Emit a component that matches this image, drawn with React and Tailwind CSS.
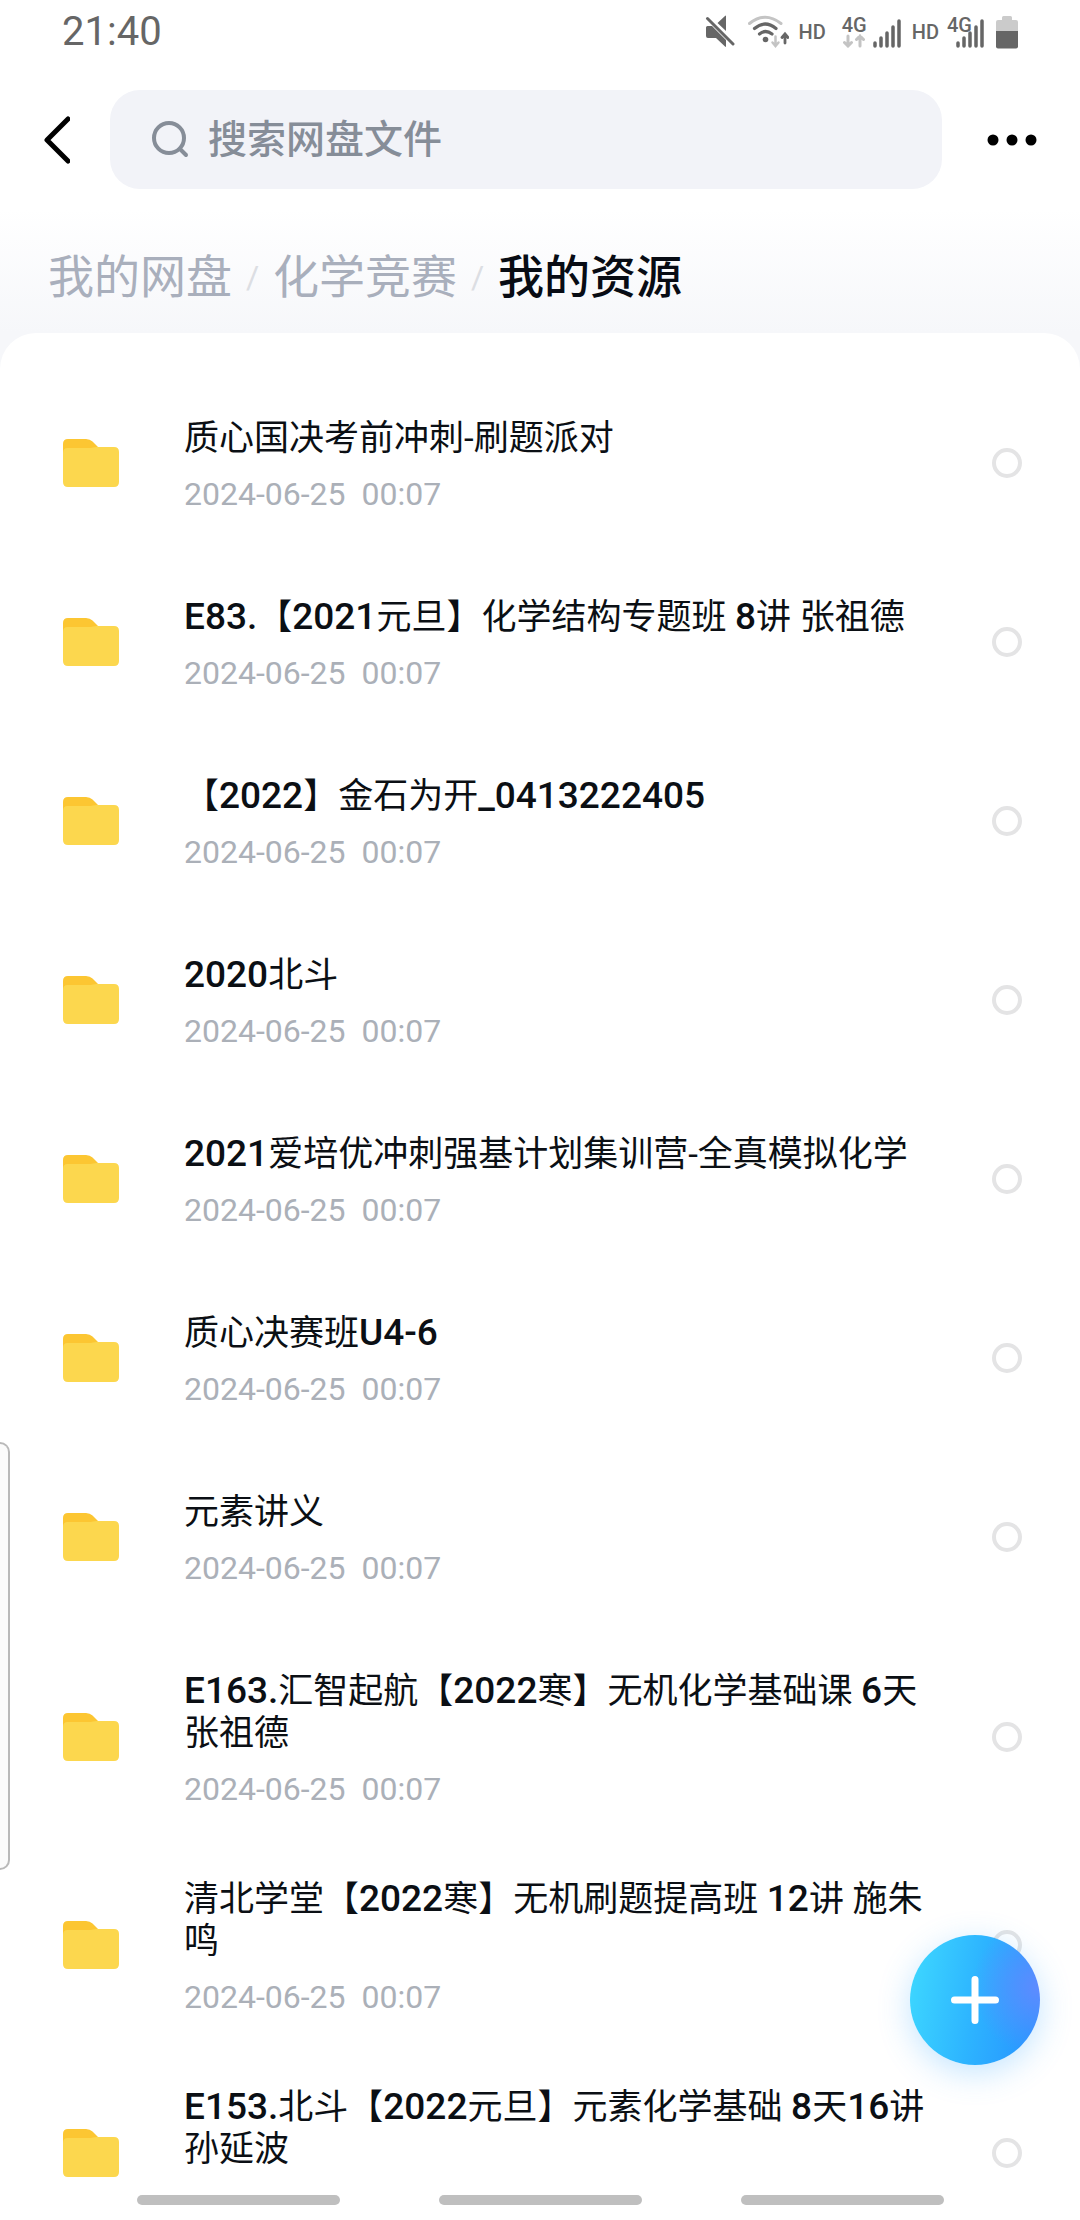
import { useState } from 'react';

const files = [
  { id: 1, name: '质心国决考前冲刺-刷题派对' },
  { id: 2, name: 'E83.【2021元旦】化学结构专题班 8讲 张祖德' },
  { id: 3, name: '【2022】金石为开_0413222405' },
  { id: 4, name: '2020北斗' },
  { id: 5, name: '2021爱培优冲刺强基计划集训营-全真模拟化学' },
  { id: 6, name: '质心决赛班U4-6' },
  { id: 7, name: '元素讲义' },
  { id: 8, name: 'E163.汇智起航【2022寒】无机化学基础课 6天 张祖德' },
  { id: 9, name: '清北学堂【2022寒】无机刷题提高班 12讲 施朱鸣' },
  { id: 10, name: 'E153.北斗【2022元旦】元素化学基础 8天16讲 孙延波' },
];

const MODIFIED = '2024-06-25  00:07';

function MuteIcon() {
  return (
    <svg width="30" height="34" viewBox="0 0 30 34" fill="#666" aria-hidden="true">
      <path d="M12.500 8L20 1q1-1 1 .5V16z" />
      <path d="M1 12.500q0-1.500 1.500-1.500H7l14 14v6q0 1.500-1 .5L11 23H3q-2 0-2-2z" />
      <path d="M2.500 3.500L28 29" stroke="#666" strokeWidth="3" strokeLinecap="round" />
    </svg>
  );
}

function WifiIcon() {
  return (
    <svg width="42" height="34" viewBox="0 0 42 34" fill="none" strokeLinecap="round" aria-hidden="true">
      <path d="M2.500 8.500Q18 -4 34 8.500" stroke="#c4c4c4" strokeWidth="3" />
      <path d="M7.500 13.500Q18 4.500 29 13.500" stroke="#666" strokeWidth="3.200" />
      <path d="M12.500 19Q18.500 14 25 19" stroke="#666" strokeWidth="3.200" />
      <circle cx="18.500" cy="24.500" r="2.800" fill="#666" />
      <path d="M28.500 21.500v9M25.500 27.500l3 3.500l3-3.500" stroke="#c4c4c4" strokeWidth="2.500" />
      <path d="M38 28v-8.500M35 22.500l3-3.500l3 3.500" stroke="#666" strokeWidth="2.800" />
    </svg>
  );
}

function SignalBars() {
  return (
    <svg width="28" height="29" viewBox="0 0 28 29" stroke="#666" strokeWidth="3.500" strokeLinecap="round" aria-hidden="true">
      <path d="M2 24v3M8 19v8M14 14v13M20 8v19M26 2v25" />
    </svg>
  );
}

function DataArrows() {
  return (
    <svg width="22" height="14" viewBox="0 0 22 14" fill="none" stroke="#c4c4c4" strokeWidth="3" strokeLinecap="round" aria-hidden="true">
      <path d="M5 2v10M1.500 8.500L5 12l3.500-3.500M17 12V2M13.500 5.500L17 2l3.500 3.500" />
    </svg>
  );
}

function BatteryIcon() {
  return (
    <svg width="22" height="33" viewBox="0 0 22 33" aria-hidden="true">
      <path d="M6 1.500q0-1.500 1.500-1.500h7q1.500 0 1.500 1.500V4h4q2 0 2 2v10H0V6q0-2 2-2h4z" fill="#cbcbcb" />
      <path d="M0 15h22v15.500q0 2-2 2H2q-2 0-2-2z" fill="#666" />
    </svg>
  );
}

function FolderIcon() {
  return (
    <svg width="56" height="48" viewBox="0 0 56 48" className="block" aria-hidden="true">
      <path d="M0 20V5q0-5 5-5h18q4 0 6.500 2.500L36 9v11z" fill="#fcc632" />
      <path d="M0 14q0-5 4.500-5H25q3 0 5-.5T34 8h17q5 0 5 5v30q0 5-5 5H5q-5 0-5-5z" fill="#fcd74e" />
    </svg>
  );
}

function StatusBar() {
  return (
    <div className="flex h-16 items-center justify-between px-[62px] text-[#666]">
      <time className="text-[40px] leading-none">21:40</time>
      <div className="flex items-center text-[20px] leading-none font-medium">
        <MuteIcon />
        <span className="ml-3"><WifiIcon /></span>
        <span className="ml-[10px]">HD</span>
        <span className="ml-4 flex items-end gap-[6px]">
          <span className="flex flex-col items-center">
            <span className="leading-[18px]">4G</span>
            <DataArrows />
          </span>
          <SignalBars />
        </span>
        <span className="ml-[11px]">HD</span>
        <span className="relative ml-2 h-8 w-[37px]">
          <span className="block leading-[18px]">4G</span>
          <span className="absolute right-0 bottom-0"><SignalBars /></span>
        </span>
        <span className="ml-3"><BatteryIcon /></span>
      </div>
    </div>
  );
}

function SearchHeader() {
  return (
    <header className="flex items-center pt-[26px] pr-[42px] pl-10">
      <button type="button" aria-label="返回" className="mr-10 shrink-0">
        <svg width="30" height="50" viewBox="0 0 30 50" fill="none" stroke="#000" strokeWidth="5" strokeLinecap="round" strokeLinejoin="round">
          <path d="M28 4L7 25l21 21" />
        </svg>
      </button>
      <label className="flex h-[99px] min-w-0 flex-1 items-center rounded-[30px] bg-[#f2f3f8] pl-10">
        <svg width="40" height="40" viewBox="0 0 40 40" fill="none" stroke="#868d98" strokeWidth="4" strokeLinecap="round" aria-hidden="true">
          <circle cx="19" cy="18" r="15" />
          <path d="M30 29l6 6" />
        </svg>
        <input
          type="text"
          aria-label="搜索网盘文件"
          placeholder="搜索网盘文件"
          className="ml-[18px] min-w-0 flex-1 bg-transparent pt-[2px] text-[39px] font-medium outline-none placeholder:text-[#868d98]"
        />
      </label>
      <button type="button" aria-label="更多" className="ml-11 shrink-0">
        <svg width="52" height="40" viewBox="0 0 52 40">
          <circle cx="7" cy="20" r="5.500" />
          <circle cx="26" cy="20" r="5.500" />
          <circle cx="45" cy="20" r="5.500" />
        </svg>
      </button>
    </header>
  );
}

function Breadcrumbs() {
  return (
    <nav className="mt-5 flex bg-linear-to-b from-white to-[#f6f7fa] px-12 pt-[38px] pb-[26px] text-[46px] leading-[60px] text-[#a9afbc]">
      <a href="#root">我的网盘</a>
      <span className="w-[41px] text-center text-[32px] text-[#dcdee3]">/</span>
      <a href="#chem">化学竞赛</a>
      <span className="w-[41px] text-center text-[32px] text-[#dcdee3]">/</span>
      <span aria-current="page" className="font-medium text-[#080c14]">我的资源</span>
    </nav>
  );
}

// Latin runs are set a little larger and heavier than the Chinese ones
function FileName({ name }) {
  return name.split(/([\x21-\x7e]+)/).map((run, i) =>
    i % 2 === 1 && run !== '-' ? <span key={i} className="text-[37px] leading-none font-medium">{run}</span> : run
  );
}

function FileRow({ file, checked, onToggle }) {
  return (
    <li className="min-h-[179px] pt-[38px] pr-[58px] pb-[31px] pl-[63px]">
      <div className="flex items-center">
        <span className="shrink-0 pb-2"><FolderIcon /></span>
        <div className="ml-[65px] min-w-0 flex-1">
          <label htmlFor={`file-${file.id}`} className="block text-[35px] leading-[42px] text-[#0b0f14]">
            <FileName name={file.name} />
          </label>
          <time className="mt-[13px] block text-[32px] leading-[42px] whitespace-pre text-[#abb0b8]">{MODIFIED}</time>
        </div>
        <span className="ml-12 shrink-0 pb-2">
          <input
            id={`file-${file.id}`}
            type="checkbox"
            checked={checked}
            onChange={() => onToggle(file.id)}
            className="block size-[30px] appearance-none rounded-full border-4 border-[#e4e4e5] checked:border-[#2aa5ff]"
          />
        </span>
      </div>
    </li>
  );
}

export default function App() {
  const [selected, setSelected] = useState([]);

  function toggle(id) {
    setSelected((prev) => (prev.includes(id) ? prev.filter((x) => x !== id) : [...prev, id]));
  }

  return (
    <div className="relative flex h-screen flex-col overflow-hidden bg-white font-[Roboto,'Noto_Sans_CJK_SC',sans-serif]">
      <StatusBar />
      <SearchHeader />
      <Breadcrumbs />

      <main className="min-h-0 flex-1 bg-[#f6f7fa]">
        <ul className="h-full overflow-hidden rounded-t-[36px] bg-white pt-[47px]">
          {files.map((file) => (
            <FileRow key={file.id} file={file} checked={selected.includes(file.id)} onToggle={toggle} />
          ))}
        </ul>
      </main>

      <div className="flex h-10 shrink-0 items-center justify-center gap-[99px] bg-white">
        <span className="h-[10px] w-[203px] rounded-full bg-[#bfbfbf]" />
        <span className="h-[10px] w-[203px] rounded-full bg-[#bfbfbf]" />
        <span className="h-[10px] w-[203px] rounded-full bg-[#bfbfbf]" />
      </div>

      {/* edge panel handle */}
      <div className="absolute bottom-[350px] left-0 h-[428px] w-[10px] rounded-r-[10px] border-2 border-l-0 border-[#b9b9b9] bg-[#fbfbfb]" />

      <button
        type="button"
        aria-label="新建"
        className="absolute right-10 bottom-[155px] flex size-[130px] items-center justify-center rounded-full bg-[radial-gradient(circle_at_100%_40%,#5f8bff_0%,#5f8bff00_45%),linear-gradient(100deg,#3dd6ff_5%,#2db4ff_50%,#2897ff_90%)] shadow-[0_8px_32px_rgba(60,170,255,0.3)]"
      >
        <svg width="50" height="50" viewBox="0 0 50 50" stroke="#fff" strokeWidth="7" strokeLinecap="round">
          <path d="M25 4.500v41M4.500 25h41" />
        </svg>
      </button>
    </div>
  );
}
